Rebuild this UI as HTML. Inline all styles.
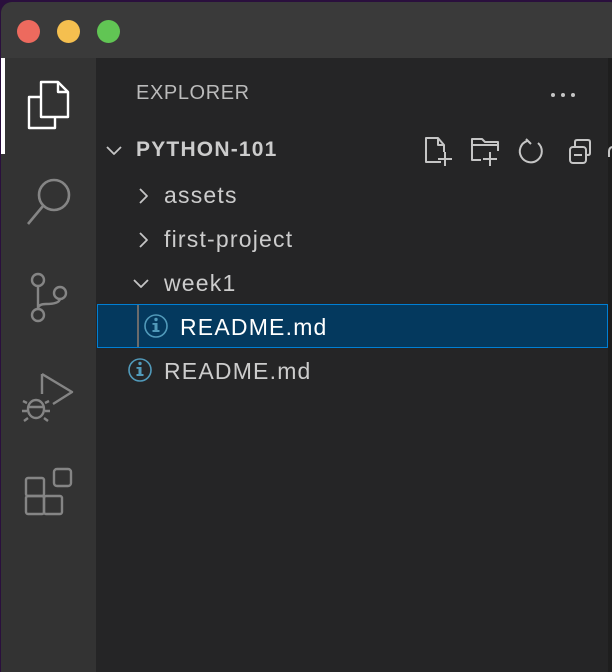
<!DOCTYPE html>
<html><head><style>
body{margin:0;width:612px;height:658px;background:#2a0f3d;overflow:hidden;font-family:"Liberation Sans",sans-serif;}
.win{position:absolute;left:1px;top:2px;width:620px;height:670px;background:#252526;border-radius:11px 11px 0 0;overflow:hidden;}
.title{position:absolute;left:0;top:0;width:100%;height:56px;background:#3a3a3a;}
.dot{position:absolute;top:18px;width:23px;height:23px;border-radius:50%;}
.act{position:absolute;left:0;top:56px;width:95px;height:620px;background:#333333;}
.ind{position:absolute;left:0;top:56px;width:4px;height:96px;background:#fff;}
.t{position:absolute;color:#cccccc;font-size:23px;letter-spacing:1.2px;white-space:nowrap;}
.right{position:absolute;left:607px;top:56px;width:20px;height:620px;background:#1e1e1e;}
</style></head><body>
<div class="win">
<div class="title"></div>
<div class="dot" style="left:16px;background:#ed6a5e"></div>
<div class="dot" style="left:56px;background:#f5bf4f"></div>
<div class="dot" style="left:96px;background:#61c554"></div>
<div class="act"></div>
<div class="ind"></div>
<div class="right"></div>
<svg style="position:absolute;left:0;top:0" width="612" height="660" fill="none" stroke-linejoin="round">
<g stroke="#fff" stroke-width="2.4">
<path d="M40 80 H57 L67 90 V115 H40 Z"/><path d="M57 80 V90 H67"/>
<path d="M40 95 H28 V126 H54 V115"/>
</g>
<g stroke="#858585" stroke-width="2.6"><circle cx="53" cy="193" r="15"/><path d="M42 204 L27 222"/></g>
<g stroke="#858585" stroke-width="2.4"><circle cx="37" cy="278" r="6"/><circle cx="37" cy="313" r="6"/><circle cx="59" cy="291" r="6"/><path d="M37 284 V307 M59 297 Q58 302 45 302 Q37 302 37 307"/></g>
<g stroke="#858585" stroke-width="2.4"><path d="M41 372 L71 390 L52 402 M41 372 V392"/><ellipse cx="35" cy="407" rx="8" ry="9"/><path d="M26 401 L22 399 M26 409 H21 M27 416 L23 419 M44 401 L48 399 M44 409 H49 M43 416 L47 419 M27 405 H43"/></g>
<g stroke="#858585" stroke-width="2.4"><rect x="25" y="476" width="18" height="18" rx="2"/><rect x="25" y="494" width="18" height="18" rx="2"/><rect x="43" y="494" width="18" height="18" rx="2"/><rect x="53" y="467" width="17" height="17" rx="3"/></g>
<g fill="#c5c5c5"><circle cx="552" cy="93" r="2"/><circle cx="562" cy="93" r="2"/><circle cx="572" cy="93" r="2"/></g>
<g stroke="#c5c5c5" stroke-width="2">
<path d="M440 160 H425 V136 H437 L443 143 V150 M437 136 V143 H443 M437 157 H451 M444 150 V164"/>
<path d="M480 158 H471 V137 H481 L484 140 H497 V149 M471 143 H497 M482 157 H496 M489 150 V164"/>
<path d="M537 141 A11 11 0 1 1 526 139 M525 137 L530 142" />
<rect x="569" y="145" width="16" height="16" rx="3"/><path d="M574 145 V140 Q574 138 576 138 H587 Q589 138 589 140 V151 Q589 153 587 153 H585 M573 153 H581"/>
<path d="M612 145 Q608 145 608 150 V155"/>
</g>
<g stroke="#c5c5c5" stroke-width="1.8">
<path d="M106 145 L113 152 L120 145"/>
<path d="M139 187 L146 194 L139 201"/>
<path d="M139 231 L146 238 L139 245"/>
<path d="M133 278 L140 285 L147 278"/>
</g>
<rect x="96.5" y="302.5" width="510" height="43" fill="#04395e" stroke="#007fd4" stroke-width="1"/>
<path d="M137 303 V345" stroke="#6b6b6b" stroke-width="2"/>
<g stroke="#519aba" stroke-width="1.6"><circle cx="155" cy="324" r="11"/><circle cx="139" cy="368" r="11"/></g>
<g fill="#519aba"><circle cx="155" cy="317.5" r="1.7"/><rect x="153.5" y="321" width="3" height="8"/><rect x="151.5" y="328" width="7" height="2"/><rect x="151.5" y="321" width="4" height="1.8"/>
<circle cx="139" cy="361.5" r="1.7"/><rect x="137.5" y="365" width="3" height="8"/><rect x="135.5" y="372" width="7" height="2"/><rect x="135.5" y="365" width="4" height="1.8"/></g>
</svg>
<div class="t" style="left:135px;top:80px;font-size:20px;letter-spacing:0.6px;color:#bbbbbb">EXPLORER</div>
<div class="t" style="left:135px;top:136px;font-weight:bold;font-size:21px;letter-spacing:1.2px">PYTHON-101</div>
<div class="t" style="left:163px;top:180px">assets</div>
<div class="t" style="left:163px;top:224px">first-project</div>
<div class="t" style="left:163px;top:268px">week1</div>
<div class="t" style="left:179px;top:312px;color:#fff">README.md</div>
<div class="t" style="left:163px;top:356px">README.md</div>
</div>
</body></html>
